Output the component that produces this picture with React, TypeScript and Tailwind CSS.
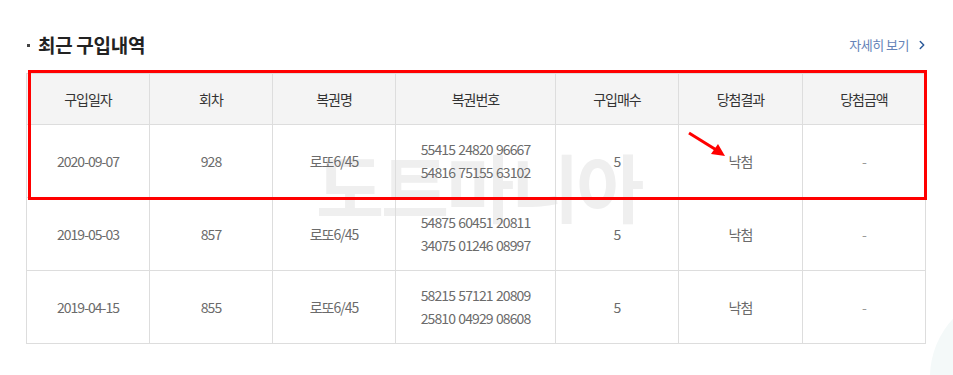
import { ChevronRight } from 'lucide-react';

type Purchase = {
  date: string;
  round: string;
  name: string;
  numbers: [string, string];
  count: number;
  result: string;
  prize: string;
};

const PURCHASES: Purchase[] = [
  { date: '2020-09-07', round: '928', name: '로또6/45', numbers: ['55415 24820 96667', '54816 75155 63102'], count: 5, result: '낙첨', prize: '-' },
  { date: '2019-05-03', round: '857', name: '로또6/45', numbers: ['54875 60451 20811', '34075 01246 08997'], count: 5, result: '낙첨', prize: '-' },
  { date: '2019-04-15', round: '855', name: '로또6/45', numbers: ['58215 57121 20809', '25810 04929 08608'], count: 5, result: '낙첨', prize: '-' },
];

const HEADERS = ['구입일자', '회차', '복권명', '복권번호', '구입매수', '당첨결과', '당첨금액'];
const WIDTHS = ['w-[123px]', 'w-[123px]', 'w-[123px]', 'w-[160px]', 'w-[123px]', 'w-[124px]', 'w-[123px]'];

export default function App() {
  return (
    <div className="relative h-[375px] w-[953px] overflow-hidden bg-white font-['Noto_Sans_CJK_KR','Noto_Sans',sans-serif]">
      {/* decorative circle at the corner */}
      <div className="absolute left-[930px] top-[292px] h-[170px] w-[170px] rounded-full bg-[#f4f9f9]" />

      <div className="relative pl-[26px] pt-[31px]">
        <div className="flex h-[28px] w-[900px] items-center justify-between">
          <h2 className="flex items-center text-[19px] font-bold tracking-[-0.3px] text-[#222]">
            <span className="mr-[8px] ml-[1px] h-[3px] w-[3px] bg-[#444]" />
            최근 구입내역
          </h2>
          <a className="flex items-center text-[13px] tracking-[-0.5px] text-[#6583b8]">
            자세히 보기
            <ChevronRight className="ml-[6px] mr-[-3px] h-[14px] w-[14px] text-[#2c5a9a]" strokeWidth={2.5} />
          </a>
        </div>

        <div className="relative mt-[14px] w-[900px]">
          <div className="pointer-events-none absolute left-[290px] top-[56px] select-none text-[74px] font-bold tracking-[-3px] text-[#efefef]">
            도트마니아
          </div>
          <table className="relative w-[900px] table-fixed border-collapse text-[14px] tracking-[-1px]">
            <thead>
              <tr className="h-[51px] bg-[#f4f4f4]">
                {HEADERS.map((h, i) => (
                  <th key={h} className={`${WIDTHS[i]} border border-[#dddddd] font-normal text-[#333]`}>
                    {h}
                  </th>
                ))}
              </tr>
            </thead>
            <tbody>
              {PURCHASES.map((p) => (
                <tr key={p.date} className="h-[73px] text-center text-[#6b6b6b]">
                  <td className="border border-[#dddddd]">{p.date}</td>
                  <td className="border border-[#dddddd]">{p.round}</td>
                  <td className="border border-[#dddddd]">{p.name}</td>
                  <td className="border border-[#dddddd] leading-[23px] tracking-[-0.9px] [word-spacing:1px]">
                    {p.numbers[0]}
                    <br />
                    {p.numbers[1]}
                  </td>
                  <td className="border border-[#dddddd]">{p.count}</td>
                  <td className="border border-[#dddddd]">{p.result}</td>
                  <td className="border border-[#dddddd] text-[#999]">{p.prize}</td>
                </tr>
              ))}
            </tbody>
          </table>
        </div>
      </div>

      {/* annotation */}
      <div className="pointer-events-none absolute left-[28px] top-[70px] h-[130px] w-[899px] border-[3px] border-[#ff0000]" />
      <svg className="pointer-events-none absolute left-[684px] top-[128px]" width="46" height="34" viewBox="0 0 46 34">
        <line x1="5" y1="5" x2="34" y2="23" stroke="#ff0000" strokeWidth="3" />
        <polygon points="41,28 27,26 34,16" fill="#ff0000" />
      </svg>
    </div>
  );
}
